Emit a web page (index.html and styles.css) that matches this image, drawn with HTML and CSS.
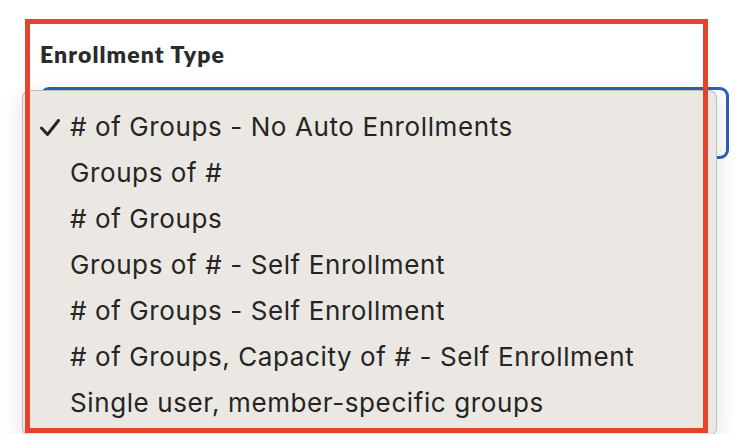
FILE: index.html
```html
<!DOCTYPE html>
<html lang="en">
<head>
<meta charset="utf-8">
<title>Enrollment Type</title>
<link rel="stylesheet" href="styles.css">
</head>
<body>
<div class="page">
  <div class="field">
    <div class="label">Enrollment Type</div>
    <div class="select"></div>
  </div>
  <ul class="menu">
    <li class="item checked">
      <svg class="check" width="20" height="18" viewBox="0 0 20 18" aria-hidden="true"><polyline points="1.5,9 7.5,15.5 18.5,1.5" fill="none" stroke="#262626" stroke-width="3" stroke-linecap="round" stroke-linejoin="round"/></svg>
      # of Groups - No Auto Enrollments
    </li>
    <li class="item">Groups of #</li>
    <li class="item"># of Groups</li>
    <li class="item">Groups of # - Self Enrollment</li>
    <li class="item"># of Groups - Self Enrollment</li>
    <li class="item"># of Groups, Capacity of # - Self Enrollment</li>
    <li class="item">Single user, member-specific groups</li>
  </ul>
  <div class="annotation"></div>
</div>
</body>
</html>
```

FILE: styles.css
```css
html, body {
  margin: 0;
  padding: 0;
  background: #ffffff;
}

.page {
  position: relative;
  width: 750px;
  height: 434px;
  overflow: hidden;
}

.field {
  padding: 40px 0 0 40px;
}

.label {
  font-family: Lato, "Liberation Sans", sans-serif;
  font-weight: 800;
  font-size: 23px;
  letter-spacing: 1.1px;
  line-height: 28px;
  color: #2b2b2b;
}

.select {
  box-sizing: border-box;
  margin-top: 19px;
  width: 689px;
  height: 72px;
  border: 3px solid #2a63b3;
  border-radius: 9px;
  background: #ffffff;
}

.menu {
  position: absolute;
  left: 22px;
  top: 90px;
  box-sizing: border-box;
  width: 695px;
  height: 346px;
  margin: 0;
  padding: 13px 0 0 0;
  list-style: none;
  background: #ebe8e4;
  border: 1px solid rgba(0, 0, 0, 0.18);
  border-radius: 8px;
  box-shadow: 0 6px 22px rgba(0, 0, 0, 0.13);
}

.item {
  position: relative;
  padding-left: 47px;
  font-family: Inter, "Noto Sans", sans-serif;
  font-size: 26px;
  letter-spacing: 0.6px;
  line-height: 46px;
  color: #252525;
  white-space: nowrap;
}

.check {
  position: absolute;
  left: 17px;
  top: 15px;
}

.annotation {
  position: absolute;
  left: 25px;
  top: 19px;
  width: 683px;
  height: 414px;
  box-sizing: border-box;
  border: 5px solid #e5432c;
}
```
